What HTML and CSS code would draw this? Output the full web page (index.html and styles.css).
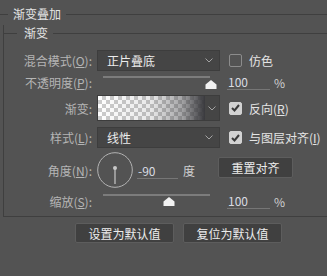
FILE: index.html
```
<!DOCTYPE html>
<html lang="zh-CN">
<head>
    <meta charset="UTF-8">
    <title>渐变叠加</title>
    <link rel="stylesheet" href="styles.css">
</head>
<body>
    <div class="dialog">
        <div class="legend outer"><span>渐变叠加</span></div>

        <div class="panel">
            <div class="legend inner"><span>渐变</span></div>

            <div class="row r1">
                <div class="lbl">混合模式(<u>O</u>):</div>
                <div class="select">
                    <span>正片叠底</span>
                    <svg class="chev" width="8" height="5" viewBox="0 0 8 5"><polyline points="0.5,0.5 4,4 7.5,0.5"/></svg>
                </div>
                <div class="check"><span class="box"></span>仿色</div>
            </div>

            <div class="row r2">
                <div class="lbl">不透明度(<u>P</u>):</div>
                <div class="slider s-top">
                    <div class="track"></div>
                    <svg class="thumb" style="left: 108px" width="12" height="9" viewBox="0 0 12 9"><polygon points="6,0 11.5,4.5 11.5,9 0.5,9 0.5,4.5"/></svg>
                </div>
                <div class="field">100</div>
                <span class="unit">%</span>
            </div>

            <div class="row r3">
                <div class="lbl">渐变:</div>
                <div class="gradient">
                    <div class="swatch"></div>
                    <div class="arrow">
                        <svg class="chev" width="8" height="5" viewBox="0 0 8 5"><polyline points="0.5,0.5 4,4 7.5,0.5"/></svg>
                    </div>
                </div>
                <div class="check"><span class="box on"><svg width="9" height="8" viewBox="0 0 9 8"><polyline points="1,4 3.5,6.5 8,1"/></svg></span>反向(<u>R</u>)</div>
            </div>

            <div class="row r4">
                <div class="lbl">样式(<u>L</u>):</div>
                <div class="select">
                    <span>线性</span>
                    <svg class="chev" width="8" height="5" viewBox="0 0 8 5"><polyline points="0.5,0.5 4,4 7.5,0.5"/></svg>
                </div>
                <div class="check"><span class="box on"><svg width="9" height="8" viewBox="0 0 9 8"><polyline points="1,4 3.5,6.5 8,1"/></svg></span>与图层对齐(<u>I</u>)</div>
            </div>

            <div class="row r5">
                <div class="lbl">角度(<u>N</u>):</div>
                <svg class="dial" width="36" height="36" viewBox="0 0 36 36">
                    <circle cx="18" cy="18" r="17.3" />
                    <line x1="18" y1="16" x2="18" y2="32" />
                    <circle class="dot" cx="18" cy="16" r="2" />
                </svg>
                <div class="field angle">-90</div>
                <span class="deg">度</span>
                <button class="btn reset">重置对齐</button>
            </div>

            <div class="row r6">
                <div class="lbl">缩放(<u>S</u>):</div>
                <div class="slider s-low">
                    <div class="track"></div>
                    <svg class="thumb" style="left: 66px" width="12" height="9" viewBox="0 0 12 9"><polygon points="6,0 11.5,4.5 11.5,9 0.5,9 0.5,4.5"/></svg>
                </div>
                <div class="field">100</div>
                <span class="unit">%</span>
            </div>
        </div>

        <div class="buttons">
            <button class="btn wide">设置为默认值</button>
            <button class="btn wide">复位为默认值</button>
        </div>
    </div>
</body>
</html>
```

FILE: styles.css
```
* {
    margin: 0;
    padding: 0;
    box-sizing: border-box;
}

body {
    background: #535353;
    font-family: "Noto Sans CJK SC", "Liberation Sans", sans-serif;
    font-size: 12px;
    color: #e4e4e4;
    width: 327px;
    height: 276px;
    overflow: hidden;
}

u {
    text-decoration: underline;
    text-underline-offset: 1px;
}

/* group titles with a rule either side */
.legend {
    display: flex;
    align-items: center;
    height: 16px;
    line-height: 16px;
}

.legend::before,
.legend::after {
    content: "";
    height: 1px;
    background: #3f3f3f;
}

.legend::after {
    flex: 1;
}

.outer {
    margin-top: 6px;
}

.outer::before {
    width: 8px;
}

.outer span {
    margin: 0 5px 0 5px;
}

.panel {
    margin-top: 11px;
    margin-left: 3px;
    border-left: 1px solid #3f3f3f;
    border-bottom: 1px solid #3f3f3f;
    padding-bottom: 2px;
}

.inner {
    margin-top: -8px;
    margin-left: -1px;
}

.inner::before {
    width: 14px;
}

.inner span {
    margin: 0 5px 0 7px;
}

/* rows */
.row {
    display: flex;
    align-items: center;
}

.lbl {
    width: 88px;
    flex: none;
    text-align: right;
    color: #b5b5b5;
    margin-right: 5px;
}

.r1 { height: 22px; margin-top: 8px; }
.r2 { height: 22px; }
.r3 { height: 30px; }
.r4 { height: 29px; }
.r5 { height: 36px; }
.r6 { height: 26px; }

.select {
    width: 123px;
    height: 21px;
    background: #454545;
    border: 1px solid #3d3d3d;
    display: flex;
    align-items: center;
    justify-content: space-between;
    padding: 0 6px 0 9px;
    color: #ececec;
}

.chev polyline {
    fill: none;
    stroke: #a3a3a3;
    stroke-width: 1;
}

.check {
    display: flex;
    align-items: center;
    margin-left: 9px;
    color: #e4e4e4;
}

.box {
    width: 13px;
    height: 13px;
    border: 1px solid #8c8c8c;
    border-radius: 2px;
    margin-right: 7px;
    display: flex;
    align-items: center;
    justify-content: center;
}

.box.on {
    background: #d2d2d2;
    border-color: #d2d2d2;
}

.box polyline {
    fill: none;
    stroke: #3a3a3a;
    stroke-width: 2;
}

/* sliders */
.slider {
    position: relative;
    width: 123px;
    height: 100%;
}

.track {
    margin-left: 6px;
    width: 107px;
    height: 2px;
    background: #7c7c7c;
}

.s-top .track { margin-top: 5px; }
.s-low .track { margin-top: 6px; }

.thumb {
    position: absolute;
    top: 9px;
}

.thumb polygon {
    fill: #f2f2f2;
}

.field {
    margin-left: 7px;
    width: 43px;
    height: 15px;
    line-height: 14px;
    padding-left: 1px;
    border-bottom: 1px solid #767676;
    color: #d9dbe2;
}

.unit {
    margin-left: 4px;
    color: #d0d0d0;
}

/* gradient preview */
.gradient {
    width: 123px;
    height: 26px;
    display: flex;
    border: 1px solid #3d3d3d;
}

.swatch {
    flex: 1;
    background:
        linear-gradient(to right, rgba(58, 58, 62, 0) 0%, rgba(58, 58, 62, 0.12) 50%, rgba(58, 58, 62, 0.45) 78%, rgba(58, 58, 62, 1) 100%),
        repeating-conic-gradient(#cccccc 0 25%, #ffffff 0 50%) 0 0 / 8px 8px;
}

.arrow {
    width: 14px;
    background: #454545;
    display: flex;
    align-items: center;
    justify-content: center;
}

/* angle */
.dial circle {
    fill: none;
    stroke: #b3b3b3;
    stroke-width: 1;
}

.dial .dot {
    fill: #c8c8c8;
    stroke: none;
}

.dial line {
    stroke: #c8c8c8;
    stroke-width: 1.2;
}

.field.angle {
    margin-left: 4px;
    width: 41px;
    margin-top: 2px;
}

.deg {
    margin-left: 5px;
    color: #d0d0d0;
}

.btn {
    font-family: inherit;
    font-size: 12px;
    color: #ececec;
    background: #404040;
    border: 1px solid #5d5d5d;
    border-radius: 2px;
    height: 21px;
}

.reset {
    margin-left: 23px;
    width: 75px;
    margin-top: -5px;
}

.buttons {
    display: flex;
    gap: 9px;
    margin-top: 6px;
    margin-left: 75px;
}

.wide {
    width: 99px;
    height: 20px;
}
```
